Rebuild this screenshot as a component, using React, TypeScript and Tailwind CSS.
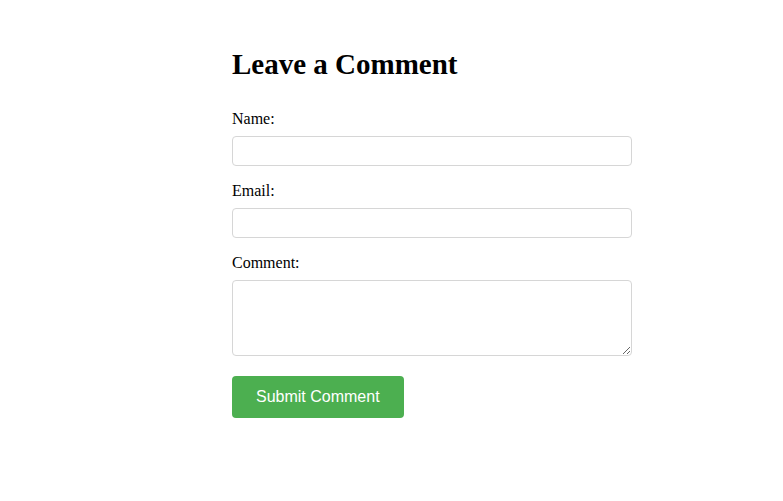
import React from 'react';

function Field({ label, id, type = 'text' }: { label: string; id: string; type?: string }) {
  return (
    <div className="flex flex-col mb-4">
      <label htmlFor={id} className="text-[16px] leading-[18px] mb-2 text-black">{label}</label>
      <input id={id} type={type} className="h-[30px] w-full border border-[#d6d6d6] rounded-[4px] px-2 outline-none bg-white" />
    </div>
  );
}

export default function App() {
  return (
    <div className="min-h-screen bg-white" style={{ fontFamily: '"Liberation Serif", "Times New Roman", serif' }}>
      <div className="w-[400px] ml-[232px] pt-[47px]">
        <h2 className="text-[29px] leading-[34px] font-bold text-black mb-[29px]">Leave a Comment</h2>
        <form onSubmit={(e) => e.preventDefault()}>
          <Field label="Name:" id="name" />
          <Field label="Email:" id="email" type="email" />
          <div className="flex flex-col">
            <label htmlFor="comment" className="text-[16px] leading-[18px] mb-2 text-black">Comment:</label>
            <textarea id="comment" className="block h-[76px] w-full border border-[#d6d6d6] rounded-[4px] px-2 py-1 outline-none bg-white" />
          </div>
          <button type="submit"
            className="mt-5 h-[42px] px-6 bg-[#4caf50] text-white text-[16px] leading-[18px] rounded-[4px]"
            style={{ fontFamily: '"Liberation Sans", Arial, sans-serif' }}>
            Submit Comment
          </button>
        </form>
      </div>
    </div>
  );
}
